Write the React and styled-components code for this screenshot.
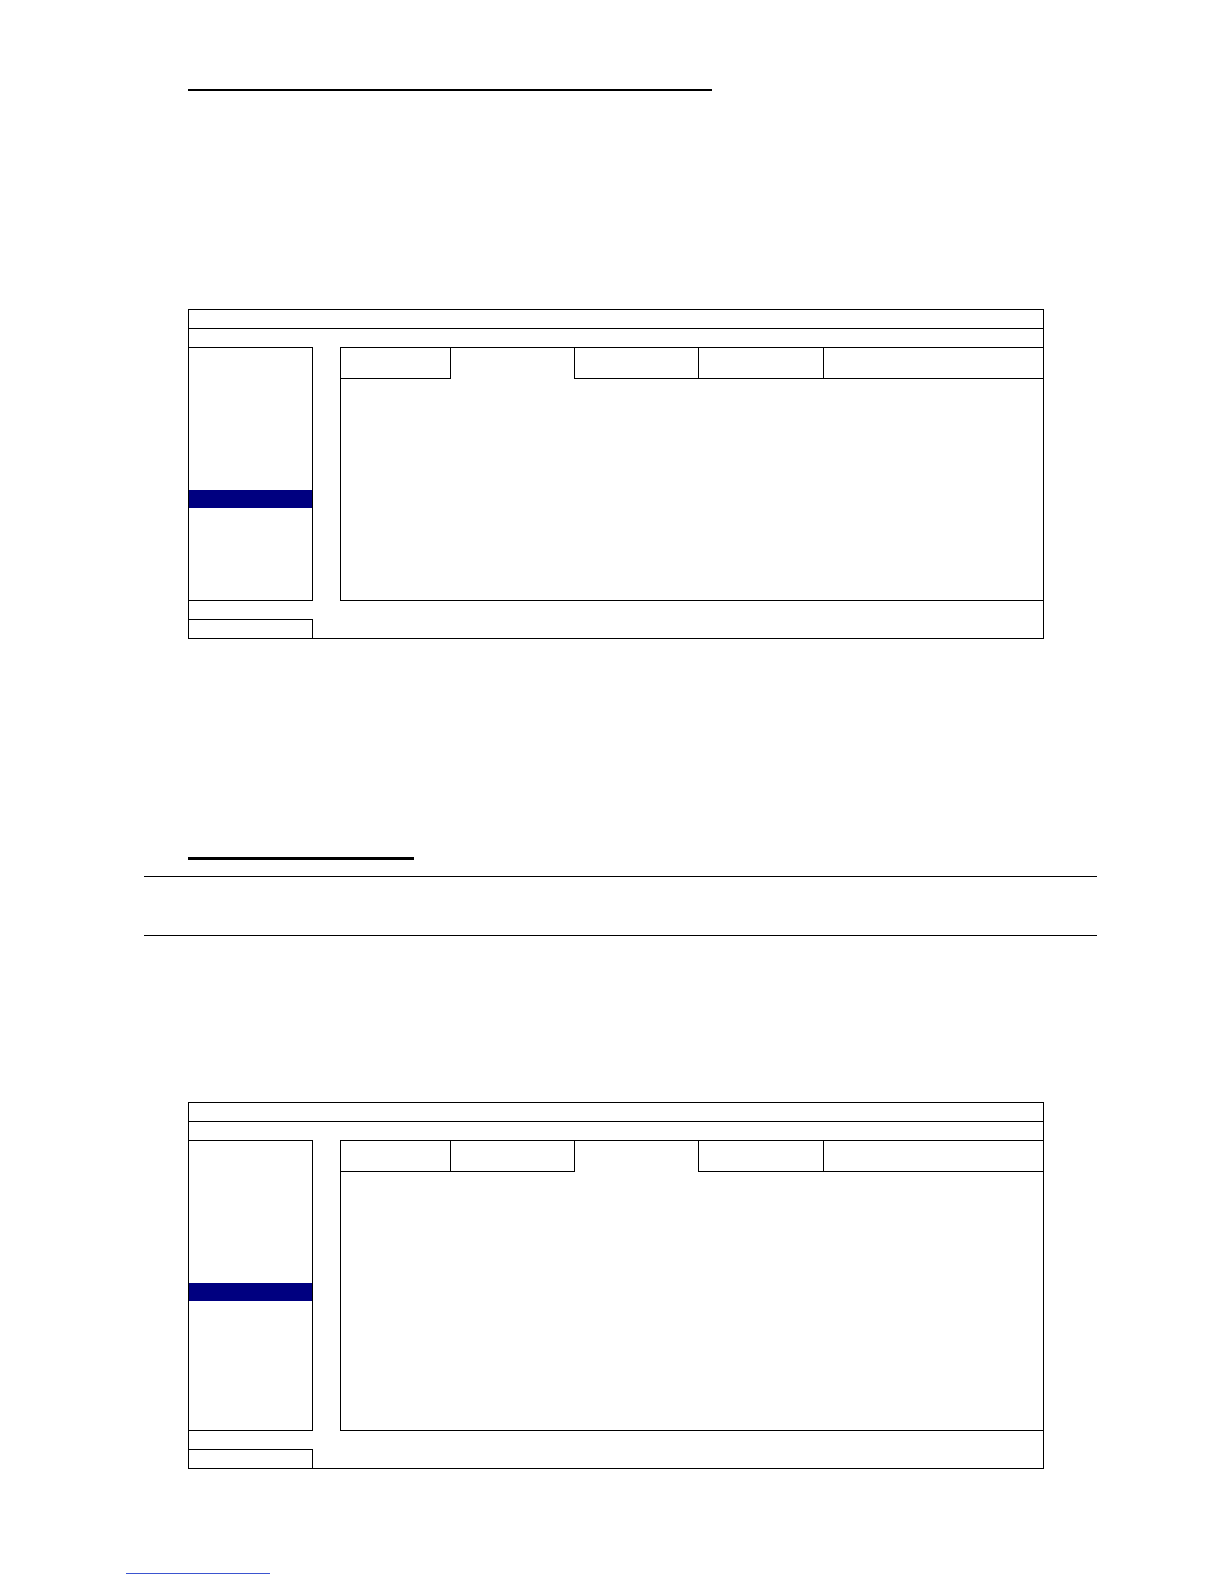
import React from 'react';
import styled, { createGlobalStyle } from 'styled-components';

const GlobalStyle = createGlobalStyle`
  html, body {
    margin: 0;
    padding: 0;
    background: #ffffff;
    font-family: 'Liberation Sans', Arial, sans-serif;
  }
  * {
    box-sizing: border-box;
  }
`;

const Page = styled.div`
  width: 1224px;
  height: 1584px;
  display: flex;
  flex-direction: column;
  overflow: hidden;
`;

const Heading = styled.div`
  margin-left: 188px;
  width: ${({ $width }) => $width}px;
  height: ${({ $height }) => $height}px;
  border-bottom: ${({ $thick }) => $thick}px solid #000;
  flex-shrink: 0;
`;

const NoteBox = styled.div`
  margin-top: 16px;
  margin-left: 144px;
  width: 953px;
  height: 60px;
  border-top: 1px solid #000;
  border-bottom: 1px solid #000;
  flex-shrink: 0;
`;

const Frame = styled.div`
  margin-top: ${({ $top }) => $top}px;
  margin-left: 188px;
  width: 856px;
  border: 1px solid #000;
  display: flex;
  flex-direction: column;
  flex-shrink: 0;
`;

const TitleBar = styled.div`
  height: 19px;
  border-bottom: 1px solid #000;
`;

const SubBar = styled.div`
  height: 18px;
`;

const Body = styled.div`
  display: grid;
  grid-template-columns: 124px 27px 1fr;
  height: ${({ $height }) => $height}px;
`;

const SideMenu = styled.div`
  border-top: 1px solid #000;
  border-right: 1px solid #000;
  border-bottom: 1px solid #000;
  padding-top: 16px;
  display: flex;
  flex-direction: column;
`;

const MenuItem = styled.div`
  height: 18px;
  flex-shrink: 0;
  background: ${({ $active }) => ($active ? '#000080' : 'transparent')};
`;

const Spacer = styled.div``;

const Content = styled.div`
  border-left: 1px solid #000;
  border-bottom: 1px solid #000;
  display: flex;
  flex-direction: column;
`;

const TabRow = styled.div`
  display: flex;
  height: 32px;
`;

const Tab = styled.div`
  flex: ${({ $width }) => ($width ? `0 0 ${$width}px` : '1 1 auto')};
  border-top: 1px solid #000;
  border-right: ${({ $last }) => ($last ? 'none' : '1px solid #000')};
  border-bottom: ${({ $active }) => ($active ? 'none' : '1px solid #000')};
`;

const Panel = styled.div`
  flex: 1;
`;

const StatusRow = styled.div`
  height: 18px;
`;

const ButtonBox = styled.div`
  width: 124px;
  height: 19px;
  border-top: 1px solid #000;
  border-right: 1px solid #000;
`;

const FooterLink = styled.div`
  margin-top: 104px;
  margin-left: 126px;
  width: 144px;
  border-top: 1px solid #3b55d0;
  flex-shrink: 0;
`;

const tabWidths = [110, 124, 124, 125, null];

const SetupFrame = ({ top, bodyHeight, activeTab }) => (
  <Frame $top={top}>
    <TitleBar />
    <SubBar />
    <Body $height={bodyHeight}>
      <SideMenu>
        {Array.from({ length: 8 }).map((_, i) => (
          <MenuItem key={i} $active={i === 7} />
        ))}
      </SideMenu>
      <Spacer />
      <Content>
        <TabRow>
          {tabWidths.map((w, i) => (
            <Tab
              key={i}
              $width={w}
              $active={i === activeTab}
              $last={i === tabWidths.length - 1}
            />
          ))}
        </TabRow>
        <Panel />
      </Content>
    </Body>
    <StatusRow />
    <ButtonBox />
  </Frame>
);

const App = () => (
  <>
    <GlobalStyle />
    <Page>
      <Heading $width={524} $height={91} $thick={2} />
      <SetupFrame top={218} bodyHeight={254} activeTab={1} />
      <Heading $width={226} $height={221} $thick={3} />
      <NoteBox />
      <SetupFrame top={166} bodyHeight={291} activeTab={2} />
      <FooterLink />
    </Page>
  </>
);

export default App;
